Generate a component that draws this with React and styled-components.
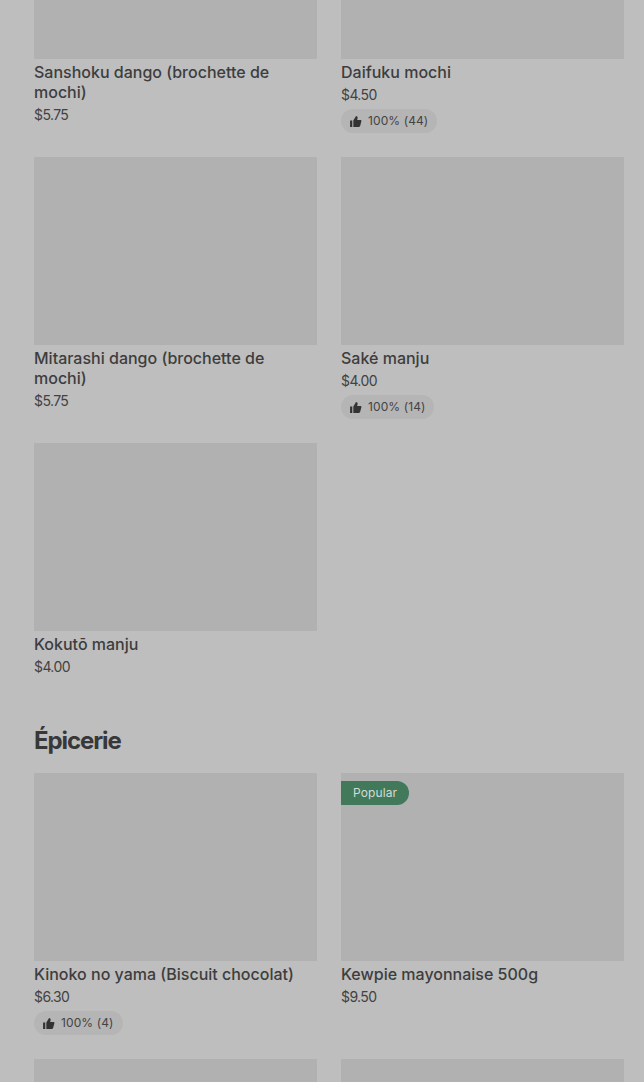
import React from "react";
import styled, { createGlobalStyle } from "styled-components";

const GlobalStyle = createGlobalStyle`
  html, body {
    margin: 0;
    padding: 0;
    height: 1082px;
    overflow: hidden;
    background: #bebebe;
  }
`;

const Page = styled.div`
  height: 1082px;
  overflow: hidden;
  background: #bebebe;
  font-family: Inter, "Liberation Sans", sans-serif;
  color: #3a3a3a;
`;

// the screenshot is a scrolled page, so the first row starts above the top edge
const Feed = styled.main`
  margin-top: -129px;
  padding: 0 20px 0 34px;
`;

const Section = styled.section`
  margin-bottom: 47px;
`;

const SectionTitle = styled.h2`
  margin: 0 0 16px;
  padding-top: 1px;
  font-size: 24px;
  line-height: 32px;
  font-weight: 700;
  letter-spacing: -1.1px;
  color: #383838;
`;

const Grid = styled.div`
  display: grid;
  grid-template-columns: repeat(2, 283px);
  column-gap: 24px;
  row-gap: 24px;
  align-items: start;
`;

const Card = styled.article`
  position: relative;
`;

const Thumb = styled.div`
  height: 188px;
  background: #b1b1b1;
`;

const PopularTag = styled.span`
  position: absolute;
  top: 8px;
  left: 0;
  height: 24px;
  padding: 0 12px 2px 12px;
  box-sizing: border-box;
  display: flex;
  align-items: center;
  font-size: 12px;
  letter-spacing: 0.1px;
  color: #d3dcd6;
  background: #41795a;
  border-radius: 0 12px 12px 0;
`;

const Title = styled.h3`
  margin: 3px 0 0;
  font-size: 16px;
  line-height: 20px;
  font-weight: 500;
  color: #3d3d3d;
`;

const Price = styled.div`
  margin-top: 3px;
  font-size: 14px;
  line-height: 20px;
  letter-spacing: -0.6px;
  color: #424242;
`;

const Rating = styled.div`
  margin-top: 4px;
  height: 24px;
  width: fit-content;
  padding: 0 9px 0 8px;
  display: flex;
  align-items: center;
  gap: 6px;
  font-size: 12px;
  color: #444;
  background: #b5b5b5;
  border-radius: 12px;
`;

const RatingLabel = styled.span`
  margin-bottom: 2px;
  letter-spacing: 0.1px;
`;

const ThumbIcon = () => (
  <svg width="13" height="13" viewBox="0 0 24 24" fill="#333">
    <path d="M2 10h4v12H2zM8 22V10l5-8c2 0 3 1.500 3 3.500L15 9h6c1.200 0 2 1 2 2.200L20.500 20.500c-.3 1-1 1.500-2 1.500z" />
  </svg>
);

const sweets = [
  { name: "Sanshoku dango (brochette de mochi)", price: "$5.75" },
  { name: "Daifuku mochi", price: "$4.50", rating: "100% (44)" },
  { name: "Mitarashi dango (brochette de mochi)", price: "$5.75" },
  { name: "Saké manju", price: "$4.00", rating: "100% (14)" },
  { name: "Kokutō manju", price: "$4.00" },
];

const grocery = [
  { name: "Kinoko no yama (Biscuit chocolat)", price: "$6.30", rating: "100% (4)" },
  { name: "Kewpie mayonnaise 500g", price: "$9.50", popular: true },
  { name: "", price: "" },
  { name: "", price: "" },
];

const Item = ({ item }) => (
  <Card>
    <Thumb />
    {item.popular && <PopularTag>Popular</PopularTag>}
    {item.name && <Title>{item.name}</Title>}
    {item.price && <Price>{item.price}</Price>}
    {item.rating && (
      <Rating>
        <ThumbIcon />
        <RatingLabel>{item.rating}</RatingLabel>
      </Rating>
    )}
  </Card>
);

const App = () => (
  <Page>
    <GlobalStyle />
    <Feed>
      <Section>
        <Grid>
          {sweets.map(item => (
            <Item key={item.name} item={item} />
          ))}
        </Grid>
      </Section>
      <Section>
        <SectionTitle>Épicerie</SectionTitle>
        <Grid>
          {grocery.map((item, i) => (
            <Item key={i} item={item} />
          ))}
        </Grid>
      </Section>
    </Feed>
  </Page>
);

export default App;
